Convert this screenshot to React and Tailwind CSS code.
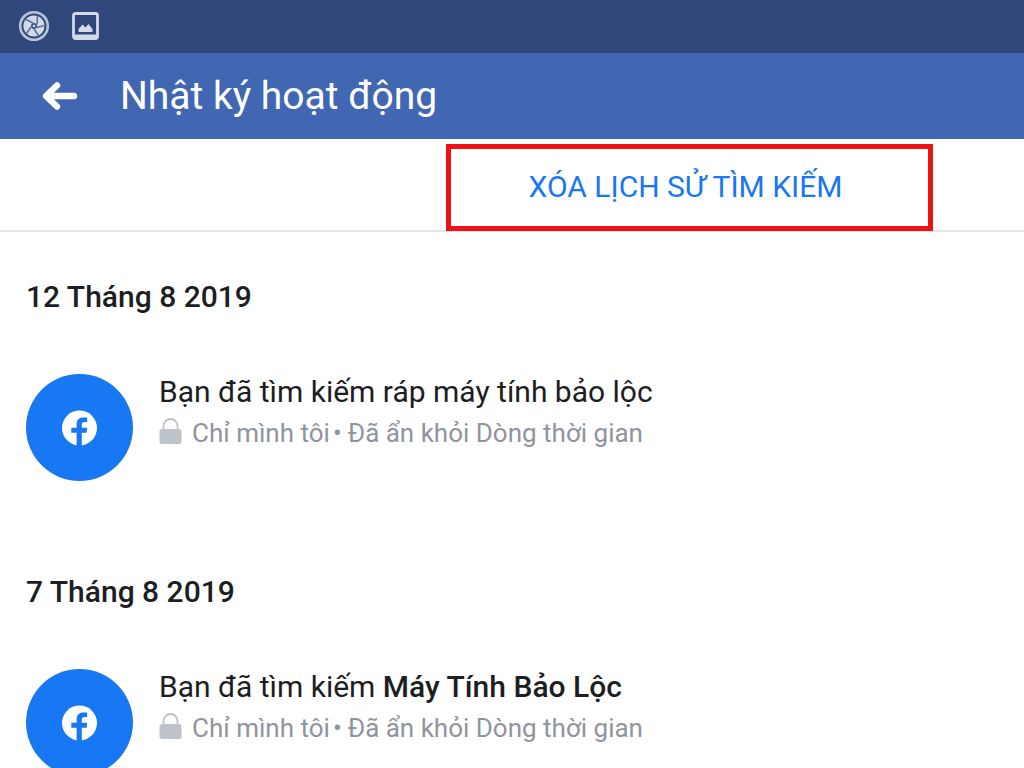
const days = [
  {
    date: '12 Tháng 8 2019',
    text: 'Bạn đã tìm kiếm ráp máy tính bảo lộc',
  },
  {
    date: '7 Tháng 8 2019',
    text: 'Bạn đã tìm kiếm ',
    strong: 'Máy Tính Bảo Lộc',
  },
];

function ShutterIcon() {
  return (
    <svg className="size-8" viewBox="0 0 32 32" fill="none" aria-hidden="true">
      <circle cx="16" cy="16" r="13.8" stroke="#b9c2d6" strokeWidth="2.6" />
      <circle cx="16" cy="16" r="10.6" fill="#d3d9e6" />
      <circle cx="16" cy="16" r="3" fill="#3d5588" />
      <circle cx="16" cy="16" r="1.3" fill="#d3d9e6" />
      <path
        d="M15 13L8 9.5M19 14.5L19.5 6M18.5 17.5L26.5 15.5M16 19L20.5 25.5M13 17L8.5 23.5"
        stroke="#5c709a"
        strokeWidth="1.6"
      />
    </svg>
  );
}

function PictureIcon() {
  return (
    <svg className="h-7 w-[27px]" viewBox="0 0 27 28" fill="none" aria-hidden="true">
      <rect x="1.5" y="1.5" width="24" height="25" rx="2" stroke="#d3d9e6" strokeWidth="2.8" />
      <path d="M2 22.5H25V27H2z" fill="#d3d9e6" />
      <path d="M6.5 20V17L10.5 12.5L13.5 15.5L16.5 12L20.5 17V20z" fill="#d3d9e6" />
    </svg>
  );
}

function BackIcon() {
  return (
    <svg className="h-7 w-9" viewBox="0 0 36 28" fill="none" aria-hidden="true">
      <path
        d="M15 3.5L4 14L15 24.5M4.5 14H32"
        stroke="#fff"
        strokeWidth="6.4"
        strokeLinecap="round"
        strokeLinejoin="round"
      />
    </svg>
  );
}

function LockIcon() {
  return (
    <svg className="h-[30px] w-[23px] shrink-0" viewBox="0 0 23 30" fill="none" aria-hidden="true">
      <path d="M4.5 13V8A7 7 0 0 1 18.5 8V13" stroke="#bec3c9" strokeWidth="1.8" />
      <rect x="0.5" y="11" width="22" height="15" rx="2.5" fill="#bec3c9" />
    </svg>
  );
}

function FacebookBadge() {
  return (
    <div className="flex size-[107px] shrink-0 items-center justify-center rounded-full bg-[#1877f2]">
      <svg className="size-9" viewBox="0 0 36 36" aria-hidden="true">
        <circle cx="17.5" cy="18" r="17.5" fill="#fff" />
        <path
          d="M14.6 36V22.7H9.3V17.8H14.6V14.5C14.6 9.8 17 7.4 21.4 7.4H25.2V12H22.6C20.6 12 19.8 13 19.8 14.8V17.8H25.2L24.6 22.7H19.8V36z"
          fill="#1877f2"
        />
      </svg>
    </div>
  );
}

function DaySection({ date, text, strong }) {
  return (
    <section className="px-[26px] pb-[93px]">
      <h2 className="text-[30px] leading-9 font-medium">{date}</h2>
      <div className="mt-[59px] flex gap-[26px]">
        <FacebookBadge />
        <div className="min-w-0">
          <p className="text-[30px] leading-9">
            {text}
            {strong && <strong className="font-medium">{strong}</strong>}
          </p>
          <div className="mt-[5px] flex items-center gap-[10px] text-[26px] leading-9 text-[#90949c]">
            <LockIcon />
            <p>
              Chỉ mình tôi
              <span className="mr-[6px] ml-[3px]">•</span>
              Đã ẩn khỏi Dòng thời gian
            </p>
          </div>
        </div>
      </div>
    </section>
  );
}

export default function App() {
  return (
    <div className="h-screen overflow-hidden bg-white font-['Roboto',sans-serif] text-[#1c1e21]">
      <div className="flex h-[53px] items-center gap-[22px] bg-[#2f477a] px-[18px] pb-[2px]">
        <ShutterIcon />
        <PictureIcon />
      </div>
      <header className="flex h-[86px] items-center gap-[42px] bg-[#4267b2] px-[42px] text-white">
        <button type="button" aria-label="Quay lại">
          <BackIcon />
        </button>
        <h1 className="text-[39px] leading-[48px]">Nhật ký hoạt động</h1>
      </header>
      <div className="flex justify-end border-b-2 border-[#e5e5e5] pt-[5px] pr-[91px]">
        <button
          type="button"
          className="-mb-[1px] h-[87px] w-[487px] border-[5px] border-[#ee1217] pr-2 pb-[2px] text-[30px] leading-9 text-[#1877f2]"
        >
          XÓA LỊCH SỬ TÌM KIẾM
        </button>
      </div>
      <main className="pt-[47px]">
        {days.map((day) => (
          <DaySection key={day.date} {...day} />
        ))}
      </main>
    </div>
  );
}
